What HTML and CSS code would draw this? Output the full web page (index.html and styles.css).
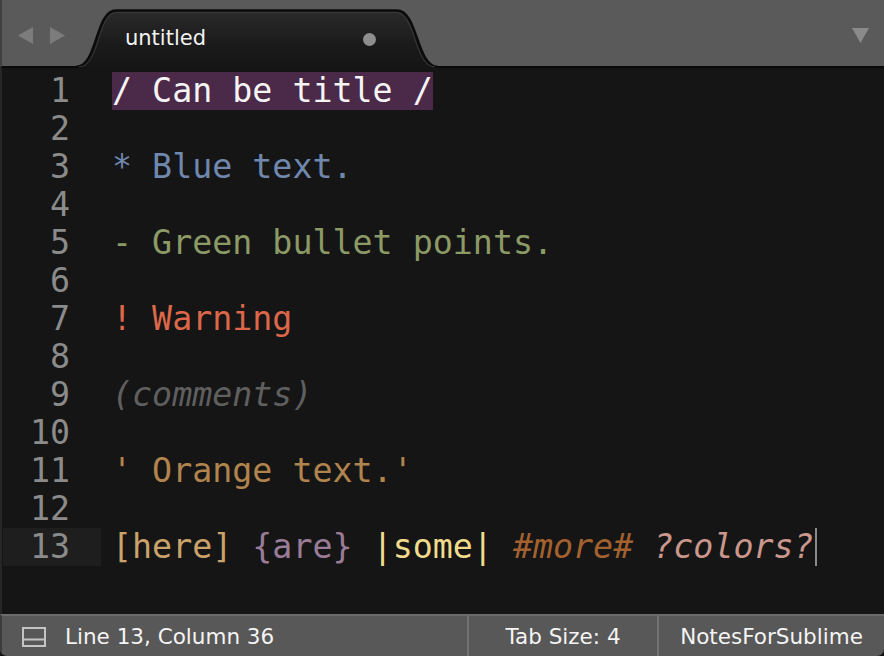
FILE: index.html
```html
<!DOCTYPE html>
<html>
<head>
<meta charset="utf-8">
<link rel="stylesheet" href="styles.css">
</head>
<body>
<div class="window">
  <div class="tabbar">
    <div class="nav">
      <svg class="arrow" width="15" height="17" viewBox="0 0 15 17"><path d="M15 0 L0 8.5 L15 17 Z" fill="#7c7c7c"/></svg>
      <svg class="arrow" width="15" height="17" viewBox="0 0 15 17"><path d="M0 0 L15 8.5 L0 17 Z" fill="#7c7c7c"/></svg>
    </div>
    <div class="tab">
      <svg class="tab-shape" width="362" height="59" viewBox="0 0 362 59">
        <defs>
          <linearGradient id="tg" x1="0" y1="0" x2="0" y2="1">
            <stop offset="0" stop-color="#2a2a2a"/>
            <stop offset="0.6" stop-color="#1a1a1a"/>
            <stop offset="1" stop-color="#151515"/>
          </linearGradient>
        </defs>
        <path d="M0,60 C22,60 19,2 40,2 L321,2 C342,2 340,60 362,60 Z" fill="url(#tg)"/>
        <path d="M0,58 C22,58 19,1.5 40,1.5 L321,1.5 C342,1.5 340,58 362,58" fill="none" stroke="#0b0b0b" stroke-width="2.5"/>
        <path d="M3,58 C24,58 21,3.5 41,3.5 L320,3.5 C340,3.5 338,58 359,58" fill="none" stroke="#3a3a3a" stroke-width="1"/>
      </svg>
      <span class="tab-title">untitled</span>
      <span class="tab-dot"></span>
    </div>
    <div class="spacer"></div>
    <svg class="dropdown" width="17" height="15" viewBox="0 0 17 15"><path d="M0 0 L17 0 L8.5 15 Z" fill="#8a8a8a"/></svg>
  </div>

  <div class="editor">
    <div class="gutter">
      <div class="ln">1</div>
      <div class="ln">2</div>
      <div class="ln">3</div>
      <div class="ln">4</div>
      <div class="ln">5</div>
      <div class="ln">6</div>
      <div class="ln">7</div>
      <div class="ln">8</div>
      <div class="ln">9</div>
      <div class="ln">10</div>
      <div class="ln">11</div>
      <div class="ln">12</div>
      <div class="ln current">13</div>
    </div>
    <div class="code">
      <div class="line"><span class="title">/ Can be title /</span></div>
      <div class="line"></div>
      <div class="line blue">* Blue text.</div>
      <div class="line"></div>
      <div class="line green">- Green bullet points.</div>
      <div class="line"></div>
      <div class="line warn">! Warning</div>
      <div class="line"></div>
      <div class="line comment">(comments)</div>
      <div class="line"></div>
      <div class="line orange">' Orange text.'</div>
      <div class="line"></div>
      <div class="line"><span class="c-here">[here]</span> <span class="c-are">{are}</span> <span class="c-some">|some|</span> <span class="c-more">#more#</span> <span class="c-colors">?colors?</span><span class="cursor"></span></div>
    </div>
  </div>

  <div class="statusbar">
    <div class="seg seg-left">
      <svg class="panel-icon" width="24" height="20" viewBox="0 0 24 20"><rect x="1" y="1" width="22" height="18" fill="none" stroke="#c4c4c4" stroke-width="2"/><line x1="1" y1="12.5" x2="23" y2="12.5" stroke="#c4c4c4" stroke-width="2"/></svg>
      <span>Line 13, Column 36</span>
    </div>
    <div class="seg seg-tab">Tab Size: 4</div>
    <div class="seg seg-syntax">NotesForSublime</div>
  </div>
</div>
</body>
</html>
```

FILE: styles.css
```css
html, body {
  margin: 0;
  padding: 0;
  background: #121212;
}

.window {
  width: 884px;
  height: 656px;
  display: flex;
  flex-direction: column;
  overflow: hidden;
  border-radius: 0 0 7px 7px;
  background: #151515;
}

/* ---------- Tab bar ---------- */
.tabbar {
  height: 66px;
  flex: none;
  display: flex;
  align-items: flex-end;
  background: #5a5a5a;
  border-bottom: 2px solid #0a0a0a;
  border-left: 2px solid #404040;
  box-sizing: content-box;
}

.nav {
  align-self: flex-start;
  margin-top: 27px;
  margin-left: 16px;
  display: flex;
  gap: 17px;
}

.arrow {
  display: block;
}

.tab {
  position: relative;
  width: 362px;
  height: 59px;
  margin-left: 11px;
  margin-bottom: -2px;
  display: flex;
  align-items: flex-start;
  z-index: 1;
}

.tab-shape {
  position: absolute;
  left: 0;
  top: 0;
}

.tab-title {
  position: relative;
  margin-left: 49px;
  margin-top: 16px;
  font-family: "DejaVu Sans", sans-serif;
  font-size: 21px;
  line-height: 26px;
  color: #f2f2f2;
}

.tab-dot {
  position: relative;
  width: 13px;
  height: 13px;
  border-radius: 50%;
  background: #8e8e8e;
  margin-left: 157px;
  margin-top: 24px;
}

.spacer {
  flex: 1;
}

.dropdown {
  align-self: flex-start;
  margin-top: 28px;
  margin-right: 15px;
  display: block;
}

/* ---------- Editor ---------- */
.editor {
  flex: 1;
  display: flex;
  background: #151515;
  border-left: 2px solid #262626;
  padding-top: 4px;
  font-family: "DejaVu Sans Mono", monospace;
  font-size: 33.3px;
}

.gutter {
  width: 99px;
  flex: none;
}

.ln {
  height: 38px;
  line-height: 38px;
  text-align: right;
  padding-right: 31px;
  color: #8b8b8b;
}

.ln.current {
  background: #1e1e1e;
  margin-left: 1px;
}

.code {
  padding-left: 11px;
  flex: 1;
}

.line {
  height: 38px;
  line-height: 38px;
  white-space: pre;
  color: #e8e8e8;
}

.title {
  display: inline-block;
  height: 38px;
  background: #4b2949;
  color: #f4f4f4;
}

.blue { color: #7088ad; }
.green { color: #8c9a66; }
.warn { color: #dc6749; }
.comment { color: #5f5f5f; font-style: italic; }
.orange { color: #b1844e; }

.c-here { color: #cba26a; }
.c-are { color: #9a7c98; }
.c-some { color: #f1dc8c; }
.c-more { color: #a3612f; font-style: italic; }
.c-colors { color: #cb978c; font-style: italic; }

.cursor {
  display: inline-block;
  width: 2px;
  height: 38px;
  vertical-align: top;
  background: #8a8a8a;
  margin-left: 1px;
}

/* ---------- Status bar ---------- */
.statusbar {
  height: 40px;
  flex: none;
  display: flex;
  background: #585858;
  border-top: 2px solid #6b6b6b;
  border-left: 2px solid #3c3c3c;
  font-family: "DejaVu Sans", sans-serif;
  font-size: 21.5px;
  color: #f4f4f4;
}

.seg {
  display: flex;
  align-items: center;
  height: 40px;
}

.seg-left {
  flex: 1;
  padding-left: 20px;
  gap: 19px;
}

.panel-icon {
  display: block;
  margin-top: 1px;
}

.seg-tab {
  width: 188px;
  justify-content: center;
  border-left: 2px solid #717171;
}

.seg-syntax {
  width: 225px;
  justify-content: center;
  border-left: 2px solid #717171;
}
```
